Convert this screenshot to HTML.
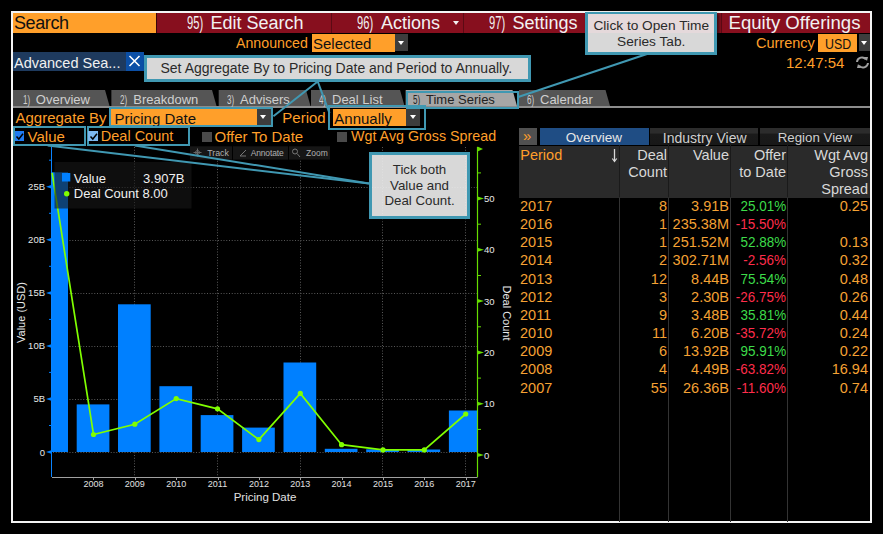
<!DOCTYPE html>
<html><head><meta charset="utf-8">
<style>
*{margin:0;padding:0;box-sizing:border-box}
html,body{width:883px;height:534px;background:#000;overflow:hidden;font-family:"Liberation Sans", sans-serif}
.a{position:absolute;white-space:nowrap}
.frame{position:absolute;left:11px;top:11px;width:861px;height:512px;border:2px solid #f4f4f4}
.txt{position:absolute;white-space:nowrap;line-height:1}
.num{display:inline-block;transform:scaleX(0.62);transform-origin:left center}
.dd{position:absolute;background:#3d3d3d}
.dd:after{content:"";position:absolute;left:50%;top:50%;margin-left:-3.5px;margin-top:-2px;border-left:3.5px solid transparent;border-right:3.5px solid transparent;border-top:4.5px solid #fff}
.callout{position:absolute;background:rgba(240,240,240,0.9);border:3px solid #4098b2;color:#2a2a2a;font-size:14px;line-height:16px;text-align:center;box-shadow:2px 2px 3px rgba(0,0,0,0.6)}
.tab{position:absolute;top:90px;height:17px;background:#4a4a4a;color:#cfcfcf;font-size:13px;line-height:18px}
.tr{position:absolute;left:0;width:883px;height:18px}
.c{position:absolute;top:0;font-size:14.5px;line-height:18px;color:#f5a234;white-space:nowrap}
.th{position:absolute;font-size:14.5px;line-height:17px;color:#d8d8d8;text-align:right;white-space:nowrap}
.chk{position:absolute;width:9px;height:9px}
</style></head><body>
<div class="frame"></div>

<!-- header bar --><div class="a" style="left:0;top:13px;width:883px;height:20px;overflow:hidden"><div class="a" style="left:0;top:-13px;width:883px;height:534px">
<div class="a" style="left:13px;top:13px;width:143px;height:20px;background:#ff9f2a"></div>
<div class="a" style="left:156px;top:13px;width:714px;height:20px;background:#870f1e"></div>
<div class="a" style="left:156px;top:13px;width:1px;height:20px;background:#3a0408"></div>
<div class="a" style="left:330.5px;top:13px;width:1px;height:20px;background:#5c0a14"></div>
<div class="a" style="left:463px;top:13px;width:1px;height:20px;background:#5c0a14"></div>
<div class="a" style="left:721px;top:13px;width:1px;height:20px;background:#5c0a14"></div>
<div class="txt" style="left:14px;top:12.5px;font-size:18px;line-height:20px;color:#111;letter-spacing:-0.4px">Search</div>
<div class="txt" style="left:187px;top:12.5px;font-size:18px;line-height:20px;color:#f2f2f2"><span class="num">95)</span></div>
<div class="txt" style="left:210.5px;top:12.5px;font-size:18px;line-height:20px;color:#f2f2f2">Edit Search</div>
<div class="txt" style="left:357px;top:12.5px;font-size:18px;line-height:20px;color:#f2f2f2"><span class="num">96)</span></div>
<div class="txt" style="left:381px;top:12.5px;font-size:18px;line-height:20px;color:#f2f2f2">Actions</div>
<div class="a" style="left:452.5px;top:21px;width:0;height:0;border-left:3.5px solid transparent;border-right:3.5px solid transparent;border-top:4px solid #f2f2f2"></div>
<div class="txt" style="left:488.5px;top:12.5px;font-size:18px;line-height:20px;color:#f2f2f2"><span class="num">97)</span></div>
<div class="txt" style="left:512.5px;top:12.5px;font-size:18px;line-height:20px;color:#f2f2f2">Settings</div>
<div class="txt" style="left:728.5px;top:12.5px;font-size:18.6px;line-height:20px;color:#f2f2f2">Equity Offerings</div>

</div></div>
<!-- row 2 -->
<div class="txt" style="left:236px;top:35px;font-size:14.2px;line-height:17px;color:#ff9f2a">Announced</div>
<div class="a" style="left:311.5px;top:34px;width:83px;height:17.5px;background:#ff9f2a"></div>
<div class="txt" style="left:313px;top:35px;font-size:15px;line-height:17px;color:#111">Selected</div>
<div class="dd" style="left:395px;top:34px;width:13px;height:17px"></div>
<div class="txt" style="left:756px;top:35px;font-size:14.5px;line-height:17px;color:#ff9f2a">Currency</div>
<div class="a" style="left:818px;top:34px;width:39px;height:17.5px;background:#ff9f2a"></div>
<div class="txt" style="left:825px;top:34.5px;font-size:15.5px;line-height:17px;color:#111"><span style="display:inline-block;transform:scaleX(0.8);transform-origin:left center">USD</span></div>
<div class="dd" style="left:859px;top:34px;width:11px;height:17px"></div>
<div class="txt" style="left:786px;top:54px;font-size:15px;line-height:17px;color:#ff9f2a">12:47:54</div>
<svg class="a" style="left:855px;top:56px" width="15" height="13" viewBox="0 0 15 13"><path d="M2 6 A5 5 0 0 1 11 3.5 M13 7 A5 5 0 0 1 4 9.5" stroke="#a0a0a0" stroke-width="2" fill="none"/><path d="M9 1 L13 1 L12 5 Z M6 12 L2 12 L3 8 Z" fill="#a0a0a0"/></svg>

<!-- advanced search chip -->
<div class="a" style="left:13px;top:52px;width:113px;height:18.5px;background:#1e3a5e"></div>
<div class="txt" style="left:14px;top:54.5px;font-size:14.5px;line-height:17px;color:#f0f0f0">Advanced Sea...</div>
<div class="a" style="left:125.7px;top:52px;width:18px;height:18.5px;background:#0b4fa6"></div>
<svg class="a" style="left:128px;top:55px" width="13" height="12" viewBox="0 0 13 12"><path d="M1.5 1 L11.5 11 M11.5 1 L1.5 11" stroke="#fff" stroke-width="1.6"/></svg>

<!-- tabs -->
<svg class="a" style="left:0;top:0" width="883" height="534">
<path d="M13 90 H105 L109.5 106 H13 Z" fill="#555555"/>
<path d="M111.4 90 H212 L216.5 106 H111.4 Z" fill="#555555"/>
<path d="M218.7 90 H306 L310.5 106 H218.7 Z" fill="#555555"/>
<path d="M311 90 H400 L404.5 106 H311 Z" fill="#555555"/>
<path d="M405.7 90 H512.5 L517 106 H405.7 Z" fill="#a6a6a6"/>
<path d="M519 90 H605.5 L610 106 H519 Z" fill="#555555"/>
<rect x="13" y="106" width="857" height="2" fill="#8c8c8c"/>
</svg>
<div class="txt" style="left:22.5px;top:92px;font-size:13px;line-height:16px;color:#d0d0d0"><span class="num">1)</span></div>
<div class="txt" style="left:35.8px;top:92px;font-size:13px;line-height:16px;color:#d0d0d0">Overview</div>
<div class="txt" style="left:120px;top:92px;font-size:13px;line-height:16px;color:#d0d0d0"><span class="num">2)</span></div>
<div class="txt" style="left:133.3px;top:92px;font-size:13px;line-height:16px;color:#d0d0d0">Breakdown</div>
<div class="txt" style="left:227px;top:92px;font-size:13px;line-height:16px;color:#d0d0d0"><span class="num">3)</span></div>
<div class="txt" style="left:240px;top:92px;font-size:13px;line-height:16px;color:#d0d0d0">Advisers</div>
<div class="txt" style="left:319px;top:92px;font-size:13px;line-height:16px;color:#d0d0d0"><span class="num">4)</span></div>
<div class="txt" style="left:332px;top:92px;font-size:13px;line-height:16px;color:#d0d0d0">Deal List</div>
<div class="txt" style="left:413px;top:92px;font-size:13px;line-height:16px;color:#222"><span class="num">5)</span></div>
<div class="txt" style="left:426px;top:92px;font-size:13px;line-height:16px;color:#222">Time Series</div>
<div class="txt" style="left:527px;top:92px;font-size:13px;line-height:16px;color:#d0d0d0"><span class="num">6)</span></div>
<div class="txt" style="left:540px;top:92px;font-size:13px;line-height:16px;color:#d0d0d0">Calendar</div>
<div class="a" style="left:405.5px;top:90.5px;width:113px;height:18.3px;border:2.5px solid #4098b2"></div>

<!-- aggregate row -->
<div class="txt" style="left:15.5px;top:109px;font-size:15px;line-height:17px;color:#ff9f2a">Aggregate By</div>
<div class="a" style="left:108.9px;top:107.2px;width:164.5px;height:20.1px;border:2px solid #4098b2"></div>
<div class="a" style="left:111px;top:108.9px;width:145.6px;height:16.5px;background:#ff9f2a"></div>
<div class="txt" style="left:114.4px;top:109.5px;font-size:15px;line-height:17px;color:#111">Pricing Date</div>
<div class="dd" style="left:256.6px;top:108.9px;width:14.7px;height:16.5px"></div>
<div class="txt" style="left:282.3px;top:109px;font-size:15px;line-height:17px;color:#ff9f2a">Period</div>
<div class="a" style="left:328.1px;top:105.2px;width:97.7px;height:24.5px;border:2px solid #4098b2"></div>
<div class="a" style="left:333px;top:108.9px;width:73px;height:17.1px;background:#ff9f2a"></div>
<div class="txt" style="left:334.3px;top:109.5px;font-size:15px;line-height:17px;color:#111">Annually</div>
<div class="dd" style="left:406px;top:108.9px;width:14.3px;height:17.1px"></div>

<!-- checkbox row -->
<div class="a" style="left:13.2px;top:126.4px;width:72.5px;height:19.6px;border:2px solid #4098b2"></div>
<div class="chk" style="left:14.5px;top:131.3px;width:9.6px;height:9.6px;background:#1f7bf2"></div>
<svg class="a" style="left:14.7px;top:131.8px" width="9" height="9"><path d="M1.5 4.5 L3.8 7 L8 1.8" stroke="#000" stroke-width="1.5" fill="none"/></svg>
<div class="txt" style="left:27.6px;top:128px;font-size:15px;line-height:17px;color:#ff9f2a">Value</div>
<div class="a" style="left:87px;top:126.4px;width:102.7px;height:19.6px;border:2px solid #4098b2"></div>
<div class="chk" style="left:88.3px;top:131.3px;width:9.6px;height:9.6px;background:#7db8ee"></div>
<svg class="a" style="left:88.5px;top:131.8px" width="9" height="9"><path d="M1.5 4.5 L3.8 7 L8 1.8" stroke="#000" stroke-width="1.5" fill="none"/></svg>
<div class="txt" style="left:100.8px;top:128px;font-size:14.5px;line-height:17px;color:#ff9f2a">Deal Count</div>
<div class="chk" style="left:202px;top:131.5px;width:10px;height:10px;background:#4a4a4a"></div>
<div class="txt" style="left:214.5px;top:128px;font-size:15px;line-height:17px;color:#ff9f2a">Offer To Date</div>
<div class="chk" style="left:337px;top:131.5px;width:10px;height:10px;background:#4a4a4a"></div>
<div class="txt" style="left:351px;top:128px;font-size:14.3px;line-height:17px;color:#ff9f2a">Wgt Avg Gross Spread</div>

<!-- chart -->
<svg class="a" style="left:0;top:0" width="883" height="534">
<line x1="134.5" y1="147" x2="134.5" y2="477" stroke="#585858" stroke-width="1" stroke-dasharray="1,1.75"/>
<line x1="217.5" y1="147" x2="217.5" y2="477" stroke="#585858" stroke-width="1" stroke-dasharray="1,1.75"/>
<line x1="300.5" y1="147" x2="300.5" y2="477" stroke="#585858" stroke-width="1" stroke-dasharray="1,1.75"/>
<line x1="382.5" y1="147" x2="382.5" y2="477" stroke="#585858" stroke-width="1" stroke-dasharray="1,1.75"/>
<line x1="465.5" y1="147" x2="465.5" y2="477" stroke="#585858" stroke-width="1" stroke-dasharray="1,1.75"/>
<line x1="53" y1="452.5" x2="478" y2="452.5" stroke="#585858" stroke-width="1" stroke-dasharray="1,1.75"/>
<line x1="53" y1="399.5" x2="478" y2="399.5" stroke="#585858" stroke-width="1" stroke-dasharray="1,1.75"/>
<line x1="53" y1="346.5" x2="478" y2="346.5" stroke="#585858" stroke-width="1" stroke-dasharray="1,1.75"/>
<line x1="53" y1="293.5" x2="478" y2="293.5" stroke="#585858" stroke-width="1" stroke-dasharray="1,1.75"/>
<line x1="53" y1="240.5" x2="478" y2="240.5" stroke="#585858" stroke-width="1" stroke-dasharray="1,1.75"/>
<line x1="53" y1="187.5" x2="478" y2="187.5" stroke="#585858" stroke-width="1" stroke-dasharray="1,1.75"/>
<rect x="51.0" y="172.3" width="17.0" height="279.7" fill="#0080ff"/>
<rect x="76.7" y="404.4" width="32.7" height="47.6" fill="#0080ff"/>
<rect x="118.0" y="304.3" width="32.7" height="147.7" fill="#0080ff"/>
<rect x="159.4" y="386.2" width="32.7" height="65.8" fill="#0080ff"/>
<rect x="200.7" y="415.1" width="32.7" height="36.9" fill="#0080ff"/>
<rect x="242.1" y="427.6" width="32.7" height="24.4" fill="#0080ff"/>
<rect x="283.5" y="362.5" width="32.7" height="89.5" fill="#0080ff"/>
<rect x="324.8" y="448.8" width="32.7" height="3.2" fill="#0080ff"/>
<rect x="366.2" y="449.3" width="32.7" height="2.7" fill="#0080ff"/>
<rect x="407.5" y="449.5" width="32.7" height="2.5" fill="#0080ff"/>
<rect x="448.9" y="410.5" width="28.1" height="41.5" fill="#0080ff"/>
<line x1="51.5" y1="147" x2="51.5" y2="477" stroke="#0a84ff" stroke-width="1"/>
<path d="M46 452.0 L52 450.0 L52 454.0 Z" fill="#0080ff"/>
<text x="45" y="455.5" text-anchor="end" font-size="9.5" fill="#e8e8e8" font-family='"Liberation Sans", sans-serif'>0</text>
<path d="M46 398.9 L52 396.9 L52 400.9 Z" fill="#0080ff"/>
<text x="45" y="402.4" text-anchor="end" font-size="9.5" fill="#e8e8e8" font-family='"Liberation Sans", sans-serif'>5B</text>
<path d="M46 345.9 L52 343.9 L52 347.9 Z" fill="#0080ff"/>
<text x="45" y="349.4" text-anchor="end" font-size="9.5" fill="#e8e8e8" font-family='"Liberation Sans", sans-serif'>10B</text>
<path d="M46 292.9 L52 290.9 L52 294.9 Z" fill="#0080ff"/>
<text x="45" y="296.4" text-anchor="end" font-size="9.5" fill="#e8e8e8" font-family='"Liberation Sans", sans-serif'>15B</text>
<path d="M46 239.8 L52 237.8 L52 241.8 Z" fill="#0080ff"/>
<text x="45" y="243.3" text-anchor="end" font-size="9.5" fill="#e8e8e8" font-family='"Liberation Sans", sans-serif'>20B</text>
<path d="M46 186.8 L52 184.8 L52 188.8 Z" fill="#0080ff"/>
<text x="45" y="190.2" text-anchor="end" font-size="9.5" fill="#e8e8e8" font-family='"Liberation Sans", sans-serif'>25B</text>
<line x1="49" y1="425.5" x2="52" y2="425.5" stroke="#0080ff" stroke-width="1"/>
<line x1="49" y1="372.4" x2="52" y2="372.4" stroke="#0080ff" stroke-width="1"/>
<line x1="49" y1="319.4" x2="52" y2="319.4" stroke="#0080ff" stroke-width="1"/>
<line x1="49" y1="266.3" x2="52" y2="266.3" stroke="#0080ff" stroke-width="1"/>
<line x1="49" y1="213.3" x2="52" y2="213.3" stroke="#0080ff" stroke-width="1"/>
<line x1="49" y1="160.2" x2="52" y2="160.2" stroke="#0080ff" stroke-width="1"/>
<line x1="477.5" y1="147" x2="477.5" y2="477" stroke="#66dd00" stroke-width="1.2"/>
<path d="M477.5 146.5 L483 149 L477.5 151.5 Z" fill="#66dd00"/>
<path d="M484 455.0 L477.5 453.0 L477.5 457.0 Z" fill="#66dd00"/>
<text x="484" y="458.5" font-size="9.5" fill="#e8e8e8" font-family='"Liberation Sans", sans-serif'>0</text>
<path d="M484 403.7 L477.5 401.7 L477.5 405.7 Z" fill="#66dd00"/>
<text x="484" y="407.2" font-size="9.5" fill="#e8e8e8" font-family='"Liberation Sans", sans-serif'>10</text>
<path d="M484 352.4 L477.5 350.4 L477.5 354.4 Z" fill="#66dd00"/>
<text x="484" y="355.9" font-size="9.5" fill="#e8e8e8" font-family='"Liberation Sans", sans-serif'>20</text>
<path d="M484 301.1 L477.5 299.1 L477.5 303.1 Z" fill="#66dd00"/>
<text x="484" y="304.6" font-size="9.5" fill="#e8e8e8" font-family='"Liberation Sans", sans-serif'>30</text>
<path d="M484 249.8 L477.5 247.8 L477.5 251.8 Z" fill="#66dd00"/>
<text x="484" y="253.3" font-size="9.5" fill="#e8e8e8" font-family='"Liberation Sans", sans-serif'>40</text>
<path d="M484 198.5 L477.5 196.5 L477.5 200.5 Z" fill="#66dd00"/>
<text x="484" y="202.0" font-size="9.5" fill="#e8e8e8" font-family='"Liberation Sans", sans-serif'>50</text>
<line x1="477.5" y1="429.4" x2="481" y2="429.4" stroke="#66dd00" stroke-width="1"/>
<line x1="477.5" y1="378.1" x2="481" y2="378.1" stroke="#66dd00" stroke-width="1"/>
<line x1="477.5" y1="326.8" x2="481" y2="326.8" stroke="#66dd00" stroke-width="1"/>
<line x1="477.5" y1="275.5" x2="481" y2="275.5" stroke="#66dd00" stroke-width="1"/>
<line x1="477.5" y1="224.2" x2="481" y2="224.2" stroke="#66dd00" stroke-width="1"/>
<line x1="477.5" y1="172.9" x2="481" y2="172.9" stroke="#66dd00" stroke-width="1"/>
<line x1="52" y1="477.5" x2="477.5" y2="477.5" stroke="#a0a0a0" stroke-width="1"/>
<line x1="93.5" y1="477" x2="93.5" y2="480" stroke="#a0a0a0" stroke-width="1"/>
<line x1="135.5" y1="477" x2="135.5" y2="480" stroke="#a0a0a0" stroke-width="1"/>
<line x1="176.5" y1="477" x2="176.5" y2="480" stroke="#a0a0a0" stroke-width="1"/>
<line x1="218.5" y1="477" x2="218.5" y2="480" stroke="#a0a0a0" stroke-width="1"/>
<line x1="259.5" y1="477" x2="259.5" y2="480" stroke="#a0a0a0" stroke-width="1"/>
<line x1="300.5" y1="477" x2="300.5" y2="480" stroke="#a0a0a0" stroke-width="1"/>
<line x1="342.5" y1="477" x2="342.5" y2="480" stroke="#a0a0a0" stroke-width="1"/>
<line x1="383.5" y1="477" x2="383.5" y2="480" stroke="#a0a0a0" stroke-width="1"/>
<line x1="424.5" y1="477" x2="424.5" y2="480" stroke="#a0a0a0" stroke-width="1"/>
<line x1="466.5" y1="477" x2="466.5" y2="480" stroke="#a0a0a0" stroke-width="1"/>
<text x="93.5" y="487" text-anchor="middle" font-size="9" fill="#e0e0e0" font-family='"Liberation Sans", sans-serif'>2008</text>
<text x="134.8" y="487" text-anchor="middle" font-size="9" fill="#e0e0e0" font-family='"Liberation Sans", sans-serif'>2009</text>
<text x="176.2" y="487" text-anchor="middle" font-size="9" fill="#e0e0e0" font-family='"Liberation Sans", sans-serif'>2010</text>
<text x="217.5" y="487" text-anchor="middle" font-size="9" fill="#e0e0e0" font-family='"Liberation Sans", sans-serif'>2011</text>
<text x="258.9" y="487" text-anchor="middle" font-size="9" fill="#e0e0e0" font-family='"Liberation Sans", sans-serif'>2012</text>
<text x="300.3" y="487" text-anchor="middle" font-size="9" fill="#e0e0e0" font-family='"Liberation Sans", sans-serif'>2013</text>
<text x="341.6" y="487" text-anchor="middle" font-size="9" fill="#e0e0e0" font-family='"Liberation Sans", sans-serif'>2014</text>
<text x="383.0" y="487" text-anchor="middle" font-size="9" fill="#e0e0e0" font-family='"Liberation Sans", sans-serif'>2015</text>
<text x="424.3" y="487" text-anchor="middle" font-size="9" fill="#e0e0e0" font-family='"Liberation Sans", sans-serif'>2016</text>
<text x="465.7" y="487" text-anchor="middle" font-size="9" fill="#e0e0e0" font-family='"Liberation Sans", sans-serif'>2017</text>
<text x="265" y="500.5" text-anchor="middle" font-size="11.5" fill="#e0e0e0" font-family='"Liberation Sans", sans-serif'>Pricing Date</text>
<text transform="translate(24.5,312.5) rotate(-90)" text-anchor="middle" font-size="11" fill="#e8e8e8" font-family='"Liberation Sans", sans-serif'>Value (USD)</text>
<text transform="translate(503,313) rotate(90)" text-anchor="middle" font-size="11" fill="#e8e8e8" font-family='"Liberation Sans", sans-serif'>Deal Count</text>
<polyline points="52.1,172.9 93.5,434.5 134.8,424.2 176.2,398.6 217.5,408.8 258.9,439.6 300.3,393.4 341.6,444.7 383.0,449.9 424.3,449.9 465.7,414.0" fill="none" stroke="#80ff00" stroke-width="1.7"/>
<circle cx="93.5" cy="434.5" r="2.6" fill="#80ff00"/>
<circle cx="134.8" cy="424.2" r="2.6" fill="#80ff00"/>
<circle cx="176.2" cy="398.6" r="2.6" fill="#80ff00"/>
<circle cx="217.5" cy="408.8" r="2.6" fill="#80ff00"/>
<circle cx="258.9" cy="439.6" r="2.6" fill="#80ff00"/>
<circle cx="300.3" cy="393.4" r="2.6" fill="#80ff00"/>
<circle cx="341.6" cy="444.7" r="2.6" fill="#80ff00"/>
<circle cx="383.0" cy="449.9" r="2.6" fill="#80ff00"/>
<circle cx="424.3" cy="449.9" r="2.6" fill="#80ff00"/>
<circle cx="465.7" cy="414.0" r="2.6" fill="#80ff00"/>
<rect x="54.5" y="162" width="137" height="46.5" fill="rgb(24,24,24)" fill-opacity="0.6"/>
<rect x="62" y="173" width="8.3" height="8.5" fill="#0080ff"/>
<circle cx="66.7" cy="193.7" r="2.7" fill="#80ff00"/>
<text x="73.8" y="182.6" font-size="13" fill="#f0f0f0" font-family='"Liberation Sans", sans-serif'>Value</text>
<text x="184.3" y="182.6" text-anchor="end" font-size="13" fill="#f0f0f0" font-family='"Liberation Sans", sans-serif'>3.907B</text>
<text x="73.8" y="198.4" font-size="13" fill="#f0f0f0" font-family='"Liberation Sans", sans-serif'>Deal Count 8.00</text>
<rect x="190" y="146.3" width="42" height="13.3" fill="#161616"/>
<rect x="233" y="146.3" width="55" height="13.3" fill="#161616"/>
<rect x="289" y="146.3" width="41" height="13.3" fill="#161616"/>
<text x="207.2" y="156" font-size="8.8" fill="#b0b0b0" font-family='"Liberation Sans", sans-serif'>Track</text>
<text x="250.7" y="156" font-size="8.5" fill="#b0b0b0" font-family='"Liberation Sans", sans-serif' textLength="33">Annotate</text>
<text x="306" y="156" font-size="8.5" fill="#b0b0b0" font-family='"Liberation Sans", sans-serif'>Zoom</text>
<path d="M193.5 152.5 h8 M197.5 148.5 v8" stroke="#666" stroke-width="1"/><circle cx="197.5" cy="152.5" r="2" stroke="#666" stroke-width="1" fill="none"/>
<path d="M240 156 L246 150 M240 156 h6" stroke="#777" stroke-width="1"/>
<circle cx="295" cy="151.5" r="2.5" stroke="#777" stroke-width="1" fill="none"/><path d="M297 153.5 L300 157" stroke="#777" stroke-width="1"/>
</svg>

<!-- right table -->
<div class="a" style="left:519px;top:127.5px;width:18px;height:17.7px;background:#505050"></div>
<div class="txt" style="left:523px;top:128px;font-size:15px;line-height:16px;color:#ff9f2a">&#187;</div>
<div class="a" style="left:539.5px;top:127.5px;width:109.3px;height:17.7px;background:#1f4d84"></div>
<div class="txt" style="left:565.7px;top:130px;font-size:13.5px;line-height:16px;color:#e6e6e6">Overview</div>
<div class="a" style="left:650px;top:127.5px;width:108px;height:17.7px;background:linear-gradient(#2c2c2c 0,#2c2c2c 28%,#1a1a1a 38%,#181818 100%)"></div>
<div class="txt" style="left:662.8px;top:130px;font-size:14px;line-height:16px;color:#cfcfcf">Industry View</div>
<div class="a" style="left:760px;top:127.5px;width:109.5px;height:17.7px;background:linear-gradient(#2c2c2c 0,#2c2c2c 28%,#1a1a1a 38%,#181818 100%)"></div>
<div class="txt" style="left:777.7px;top:130px;font-size:13.3px;line-height:16px;color:#cfcfcf">Region View</div>
<div class="a" style="left:519px;top:145.5px;width:350.5px;height:52.5px;background:#2a2a2a"></div>
<div class="a" style="left:619px;top:145.2px;width:1px;height:52.3px;background:#1a1a1a"></div>
<div class="a" style="left:668px;top:145.2px;width:1px;height:52.3px;background:#1a1a1a"></div>
<div class="a" style="left:730px;top:145.2px;width:1px;height:52.3px;background:#1a1a1a"></div>
<div class="a" style="left:787px;top:145.2px;width:1px;height:52.3px;background:#1a1a1a"></div>
<div class="a" style="left:619px;top:197.5px;width:1px;height:324px;background:#333"></div>
<div class="a" style="left:668px;top:197.5px;width:1px;height:324px;background:#333"></div>
<div class="a" style="left:730px;top:197.5px;width:1px;height:324px;background:#333"></div>
<div class="a" style="left:787px;top:197.5px;width:1px;height:324px;background:#333"></div>
<div class="th" style="left:520.3px;top:147px;color:#ff9f2a;text-align:left">Period</div>
<svg class="a" style="left:610px;top:148px" width="9" height="15"><path d="M4.5 1 V13" stroke="#d8d8d8" stroke-width="1.3"/><path d="M2.3 10.5 L4.5 13.5 L6.7 10.5" stroke="#d8d8d8" stroke-width="1.2" fill="none"/></svg>
<div class="th" style="right:216px;top:147px;">Deal<br>Count</div>
<div class="th" style="right:154px;top:147px;">Value</div>
<div class="th" style="right:97px;top:147px;">Offer<br>to Date</div>
<div class="th" style="right:15px;top:147px;">Wgt Avg<br>Gross<br>Spread</div>
<div class="tr" style="top:197.0px"><span class="c" style="left:520px">2017</span><span class="c r" style="right:216px">8</span><span class="c r" style="right:154px">3.91B</span><span class="c r" style="right:97px;color:#3ddc4a;transform:scaleX(0.93);transform-origin:right center">25.01%</span><span class="c r" style="right:15px">0.25</span></div>
<div class="tr" style="top:215.2px"><span class="c" style="left:520px">2016</span><span class="c r" style="right:216px">1</span><span class="c r" style="right:154px">235.38M</span><span class="c r" style="right:97px;color:#ff2d4b;transform:scaleX(0.93);transform-origin:right center">-15.50%</span><span class="c r" style="right:15px"></span></div>
<div class="tr" style="top:233.3px"><span class="c" style="left:520px">2015</span><span class="c r" style="right:216px">1</span><span class="c r" style="right:154px">251.52M</span><span class="c r" style="right:97px;color:#3ddc4a;transform:scaleX(0.93);transform-origin:right center">52.88%</span><span class="c r" style="right:15px">0.13</span></div>
<div class="tr" style="top:251.4px"><span class="c" style="left:520px">2014</span><span class="c r" style="right:216px">2</span><span class="c r" style="right:154px">302.71M</span><span class="c r" style="right:97px;color:#ff2d4b;transform:scaleX(0.93);transform-origin:right center">-2.56%</span><span class="c r" style="right:15px">0.32</span></div>
<div class="tr" style="top:269.6px"><span class="c" style="left:520px">2013</span><span class="c r" style="right:216px">12</span><span class="c r" style="right:154px">8.44B</span><span class="c r" style="right:97px;color:#3ddc4a;transform:scaleX(0.93);transform-origin:right center">75.54%</span><span class="c r" style="right:15px">0.48</span></div>
<div class="tr" style="top:287.8px"><span class="c" style="left:520px">2012</span><span class="c r" style="right:216px">3</span><span class="c r" style="right:154px">2.30B</span><span class="c r" style="right:97px;color:#ff2d4b;transform:scaleX(0.93);transform-origin:right center">-26.75%</span><span class="c r" style="right:15px">0.26</span></div>
<div class="tr" style="top:305.9px"><span class="c" style="left:520px">2011</span><span class="c r" style="right:216px">9</span><span class="c r" style="right:154px">3.48B</span><span class="c r" style="right:97px;color:#3ddc4a;transform:scaleX(0.93);transform-origin:right center">35.81%</span><span class="c r" style="right:15px">0.44</span></div>
<div class="tr" style="top:324.0px"><span class="c" style="left:520px">2010</span><span class="c r" style="right:216px">11</span><span class="c r" style="right:154px">6.20B</span><span class="c r" style="right:97px;color:#ff2d4b;transform:scaleX(0.93);transform-origin:right center">-35.72%</span><span class="c r" style="right:15px">0.24</span></div>
<div class="tr" style="top:342.2px"><span class="c" style="left:520px">2009</span><span class="c r" style="right:216px">6</span><span class="c r" style="right:154px">13.92B</span><span class="c r" style="right:97px;color:#3ddc4a;transform:scaleX(0.93);transform-origin:right center">95.91%</span><span class="c r" style="right:15px">0.22</span></div>
<div class="tr" style="top:360.4px"><span class="c" style="left:520px">2008</span><span class="c r" style="right:216px">4</span><span class="c r" style="right:154px">4.49B</span><span class="c r" style="right:97px;color:#ff2d4b;transform:scaleX(0.93);transform-origin:right center">-63.82%</span><span class="c r" style="right:15px">16.94</span></div>
<div class="tr" style="top:378.5px"><span class="c" style="left:520px">2007</span><span class="c r" style="right:216px">55</span><span class="c r" style="right:154px">26.36B</span><span class="c r" style="right:97px;color:#ff2d4b;transform:scaleX(0.93);transform-origin:right center">-11.60%</span><span class="c r" style="right:15px">0.74</span></div>

<!-- callouts -->
<div class="callout" style="left:144px;top:54.7px;width:387px;height:27.6px;text-align:left;padding-left:13.5px;line-height:21px">Set Aggregate By to Pricing Date and Period to Annually.</div>
<div class="callout" style="left:585.4px;top:12px;width:131.7px;height:43px;font-size:13.7px;line-height:16.5px;padding-top:3.5px;border-top-width:2px">Click to Open Time<br>Series Tab.</div>
<div class="callout" style="left:369px;top:152.3px;width:101px;height:66.5px;font-size:13.3px;line-height:15.8px;padding-top:6.5px">Tick both<br>Value and<br>Deal Count.</div>
<svg class="a" style="left:0;top:0" width="883" height="534">
<line x1="317.7" y1="81.5" x2="273.4" y2="116.2" stroke="#4098b2" stroke-width="2"/>
<line x1="317.7" y1="81.5" x2="329.5" y2="113.1" stroke="#4098b2" stroke-width="2"/>
<line x1="647" y1="54" x2="518.2" y2="97" stroke="#4098b2" stroke-width="2"/>
<line x1="47.7" y1="145.5" x2="369" y2="183.5" stroke="#4098b2" stroke-width="2"/>
<line x1="134.8" y1="145.5" x2="369" y2="183.5" stroke="#4098b2" stroke-width="2"/>
</svg>
</body></html>
